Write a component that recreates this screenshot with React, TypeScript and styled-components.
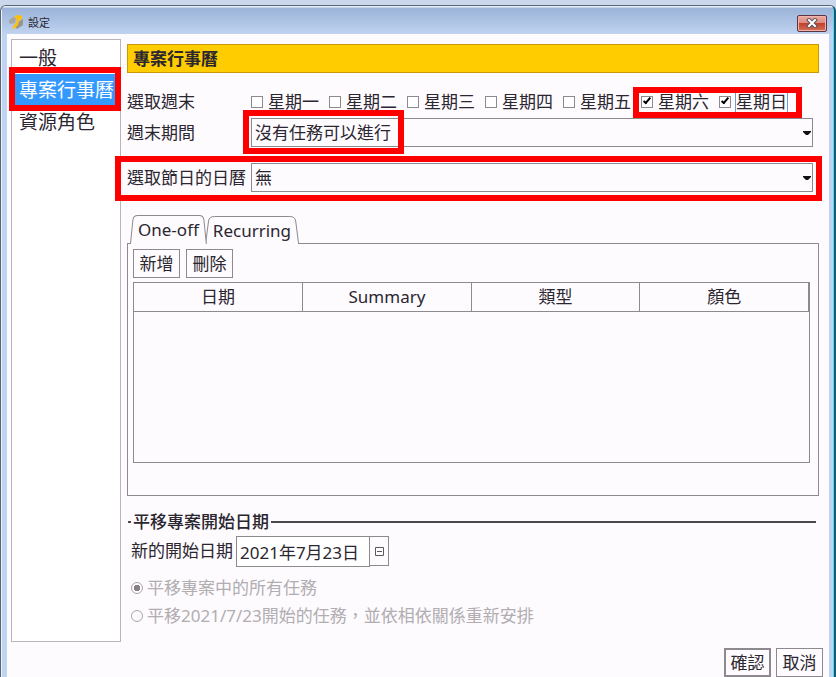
import React, { useState } from "react";
import styled, { createGlobalStyle, css } from "styled-components";

const GlobalStyle = createGlobalStyle`
  *, *::before, *::after { box-sizing: border-box; }
  body {
    margin: 0;
    background: #cbd8ec;
    color: #2b2630;
    font: 17px/24px "Noto Sans", "Noto Sans CJK TC", sans-serif;
  }
  button, input, select { font: inherit; color: inherit; }
`;

const line = "#8d898f";
const paper = "#fdfbfe";

const Desktop = styled.div`
  min-height: 100vh;
  padding-top: 5px;
  display: flex;
`;

const Window = styled.div`
  flex: 1;
  display: flex;
  flex-direction: column;
  padding: 0 5px 0 6px;
  background: #bfd3f3;
  border: 1px solid #5b6470;
  border-right: 2px solid #0f5f74;
  border-bottom: 0;
  border-radius: 6px 6px 0 0;
  box-shadow: inset 1px 1px 0 #eaf3fd, inset -1px 0 0 #5ed4f0;
  overflow: hidden;
`;

const TitleBar = styled.header`
  display: flex;
  align-items: center;
  gap: 4px;
  height: 28px;
  margin: 0 -4px 0 -5px;
  padding: 6px 6px 0 7px;
  background: linear-gradient(#e6effa 0 1px, #9bb4d8 2px, #bfd2f0);
  font-size: 11px;
  line-height: 16px;
`;

const TitleText = styled.h1`
  flex: 1;
  margin: 0;
  font: inherit;
`;

const CloseButton = styled.button`
  display: grid;
  place-items: center;
  width: 30px;
  height: 17px;
  padding: 0;
  border: 1px solid #5e3441;
  border-radius: 2px;
  background: linear-gradient(#eba89f, #dc8c82 45%, #c2412a 50%, #d4705a);
  box-shadow: inset 0 0 0 1px #efb5ac;
`;

const Client = styled.div`
  flex: 1;
  background: ${paper};
`;

const Columns = styled.div`
  display: grid;
  grid-template-columns: 110px minmax(0, 1fr);
  gap: 6px;
  padding: 5px 10px 0 4px;
`;

const Sidebar = styled.nav`
  padding-top: 2px;
  border: 1px solid #b9b5ba;
  background: #fff;
`;

const SideItem = styled.button<{ $active?: boolean }>`
  position: relative;
  display: block;
  width: 100%;
  height: 32px;
  padding: 0 0 0 7px;
  border: 0;
  background: ${(p) => (p.$active ? "#3399ff" : "transparent")};
  color: ${(p) => (p.$active ? "#fff" : "inherit")};
  font-size: 19px;
  line-height: 32px;
  text-align: left;
  white-space: nowrap;
`;

const mark = css`
  position: absolute;
  border: 6px solid #ff0000;
  pointer-events: none;
  z-index: 1;
`;

const ItemMark = styled.span`
  ${mark}
  inset: -7px -1px -5px -3px;
`;
const DaysMark = styled.span`
  ${mark}
  inset: 0 -5px -2px -8px;
`;
const ValueMark = styled.span`
  ${mark}
  inset: -8px auto -7px -8px;
  width: 161px;
`;
const RowMark = styled.span`
  ${mark}
  inset: -7px -9px -9px -12px;
`;

const Main = styled.main`
  padding: 5px 0 12px;
`;

const Banner = styled.h2`
  margin: 0;
  padding: 0 5px;
  border: 1px solid #c99a08;
  background: #ffcc00;
  font-size: 17px;
  line-height: 27px;
  font-weight: 700;
`;

const Row = styled.div<{ $top?: number }>`
  position: relative;
  display: grid;
  grid-template-columns: 124px minmax(0, 1fr);
  align-items: center;
  margin: ${(p) => p.$top ?? 0}px 6px 0 0;
  white-space: nowrap;
`;

const WeekendRow = styled(Row)`
  padding-bottom: 2px;
`;

const Days = styled.div`
  display: flex;
  height: 29px;
`;

const DayPair = styled.div`
  position: relative;
  display: flex;
`;

const Day = styled.label`
  display: flex;
  align-items: center;
  gap: 5px;
  width: 78px;
`;

const DayText = styled.span<{ $focus?: boolean }>`
  line-height: 20px;
  box-shadow: ${(p) => (p.$focus ? "-1px 0 0 #6f9ad6, 1px 0 0 #6f9ad6" : "none")};
`;

const Tick = styled.input`
  appearance: none;
  display: grid;
  place-items: center;
  width: 12px;
  height: 12px;
  margin: 0;
  border: 1px solid ${line};
  background: #fff;
  &:checked::before {
    content: "";
    width: 4px;
    height: 8px;
    margin-top: -3px;
    border: solid #000;
    border-width: 0 2px 2px 0;
    transform: rotate(40deg);
  }
`;

const SelectBox = styled.div`
  position: relative;
  display: grid;
`;

const Select = styled.select`
  appearance: none;
  height: 29px;
  padding: 0 20px 0 3px;
  border: 1px solid ${line};
  border-radius: 0;
  background: ${paper};
`;

const Caret = styled.svg`
  position: absolute;
  right: 2px;
  top: 13px;
  pointer-events: none;
`;

const TabList = styled.div`
  position: relative;
  display: flex;
  align-items: flex-end;
  margin: 23px 0 -1px 3px;
`;

const Tab = styled.button<{ $active: boolean }>`
  position: relative;
  z-index: ${(p) => (p.$active ? 1 : 0)};
  height: ${(p) => (p.$active ? 29 : 28)}px;
  padding: 0 8px;
  border: 0;
  background: none;
  line-height: 27px;
  & + & { margin-left: -2px; }
`;

const TabShape = styled.svg`
  position: absolute;
  inset: 0;
  width: 100%;
  height: 100%;
  z-index: -1;
`;

const Panel = styled.section`
  padding: 5px 8px 32px 5px;
  border: 1px solid ${line};
`;

const Buttons = styled.div<{ $end?: boolean }>`
  display: flex;
  gap: ${(p) => (p.$end ? 5 : 6)}px;
  justify-content: ${(p) => (p.$end ? "flex-end" : "flex-start")};
  padding: ${(p) => (p.$end ? "6px 6px 0" : "0")};
`;

const Button = styled.button<{ $primary?: boolean }>`
  width: 47px;
  height: 29px;
  padding: 0;
  border: ${(p) => (p.$primary ? 2 : 1)}px solid ${line};
  background: ${paper};
  line-height: 24px;
  white-space: nowrap;
`;

const TableBox = styled.div`
  min-height: 181px;
  margin-top: 4px;
  border: 1px solid ${line};
`;

const Table = styled.table`
  width: 100%;
  table-layout: fixed;
  border-collapse: collapse;
`;

const HeadCell = styled.th`
  height: 28px;
  padding: 0;
  border-bottom: 1px solid ${line};
  border-right: 1px solid ${line};
  font-weight: 400;
`;

const Group = styled.fieldset`
  min-width: 0;
  margin: 14px 0 0;
  padding: 0 0 0 4px;
  border: 0;
`;

const GroupTitle = styled.legend`
  display: flex;
  align-items: center;
  gap: 2px;
  width: 100%;
  margin-left: -3px;
  padding: 0;
  font-weight: 500;
  &::before, &::after {
    content: "";
    width: 3px;
    border-top: 2px solid #4b484d;
  }
  &::after { flex: 1; }
`;

const DateRow = styled.div`
  display: flex;
  align-items: flex-start;
  margin: 2px 0 7px;
`;

const DateLabel = styled.label`
  width: 105px;
  line-height: 30px;
  white-space: nowrap;
`;

const DateInput = styled.input`
  width: 134px;
  height: 31px;
  padding: 0 3px;
  border: 1px solid ${line};
  background: #fff;
`;

const DateButton = styled.button`
  display: grid;
  place-items: center;
  width: 19px;
  height: 30px;
  padding: 0;
  border: 1px solid ${line};
  border-left: 0;
  background: ${paper};
`;

const Option = styled.label`
  display: flex;
  align-items: center;
  gap: 4px;
  height: 28px;
  color: #b1adb1;
`;

const Radio = styled.input`
  appearance: none;
  width: 12px;
  height: 12px;
  margin: 0;
  border: 1px solid #a9a5a9;
  border-radius: 50%;
  &:checked { background: radial-gradient(circle, #858185 0 3px, transparent 3px); }
`;

function DropDown({ id, value, marked }: { id: string; value: string; marked?: boolean }) {
  return (
    <SelectBox>
      <Select id={id} defaultValue={value}>
        <option>{value}</option>
      </Select>
      <Caret width="8" height="4" viewBox="0 0 8 4" aria-hidden="true">
        <path d="M0 0H8V1L5 4H3L0 1Z" fill="#111" />
      </Caret>
      {marked && <ValueMark />}
    </SelectBox>
  );
}

function DayBox({ name, checked, focus }: { name: string; checked?: boolean; focus?: boolean }) {
  return (
    <Day>
      <Tick type="checkbox" defaultChecked={checked} />
      <DayText $focus={focus}>{name}</DayText>
    </Day>
  );
}

function TabButton({ name, active, onPick }: { name: string; active: boolean; onPick: () => void }) {
  return (
    <Tab type="button" role="tab" aria-selected={active} $active={active} onClick={onPick}>
      <TabShape viewBox="0 0 80 28" preserveAspectRatio="none" aria-hidden="true">
        <path
          d="M0.5 28L3 5Q3.5 0.5 8 0.5H72Q76.5 0.5 77 5L79.5 28"
          fill={paper}
          stroke={line}
          vectorEffect="non-scaling-stroke"
        />
      </TabShape>
      {name}
    </Tab>
  );
}

export default function App() {
  const [tab, setTab] = useState("One-off");
  return (
    <>
      <GlobalStyle />
      <Desktop>
        <Window>
          <TitleBar>
            <svg width="15" height="16" viewBox="0 0 15 16" aria-hidden="true">
              <path d="M0 5L4 2L7 3L6 8L2 9L0 8Z" fill="#aaa59e" />
              <path d="M9 7L14 4V10L8 14L6 12Z" fill="#99958f" />
              <path d="M5 2L8 0L13 1V4L10 6L9 10L4 15L4 11L7 8L8 4Z" fill="#fdc00c" />
            </svg>
            <TitleText>設定</TitleText>
            <CloseButton type="button" aria-label="關閉">
              <svg width="12" height="10" viewBox="0 0 12 10" aria-hidden="true">
                <path d="M3 2L9 8M9 2L3 8" stroke="#59525e" strokeWidth="4" strokeLinecap="square" />
                <path d="M3 2L9 8M9 2L3 8" stroke="#fff" strokeWidth="2" strokeLinecap="square" />
              </svg>
            </CloseButton>
          </TitleBar>
          <Client>
            <Columns>
              <Sidebar>
                <SideItem type="button">一般</SideItem>
                <SideItem type="button" $active>
                  專案行事曆
                  <ItemMark />
                </SideItem>
                <SideItem type="button">資源角色</SideItem>
              </Sidebar>
              <Main>
                <Banner>專案行事曆</Banner>
                <WeekendRow $top={14} role="group" aria-labelledby="weekend">
                  <span id="weekend">選取週末</span>
                  <Days>
                    {["一", "二", "三", "四", "五"].map((d) => (
                      <DayBox key={d} name={"星期" + d} />
                    ))}
                    <DayPair>
                      <DayBox name="星期六" checked />
                      <DayBox name="星期日" checked focus />
                      <DaysMark />
                    </DayPair>
                  </Days>
                </WeekendRow>
                <Row>
                  <label htmlFor="duration">週末期間</label>
                  <DropDown id="duration" value="沒有任務可以進行" marked />
                </Row>
                <Row $top={16}>
                  <label htmlFor="holiday">選取節日的日曆</label>
                  <DropDown id="holiday" value="無" />
                  <RowMark />
                </Row>
                <TabList role="tablist">
                  {["One-off", "Recurring"].map((t) => (
                    <TabButton key={t} name={t} active={t === tab} onPick={() => setTab(t)} />
                  ))}
                </TabList>
                <Panel>
                  <Buttons>
                    <Button type="button">新增</Button>
                    <Button type="button">刪除</Button>
                  </Buttons>
                  <TableBox>
                    <Table>
                      <thead>
                        <tr>
                          {["日期", "Summary", "類型", "顏色"].map((h) => (
                            <HeadCell key={h} scope="col">{h}</HeadCell>
                          ))}
                        </tr>
                      </thead>
                    </Table>
                  </TableBox>
                </Panel>
                <Group>
                  <GroupTitle>平移專案開始日期</GroupTitle>
                  <DateRow>
                    <DateLabel htmlFor="start">新的開始日期</DateLabel>
                    <DateInput id="start" defaultValue="2021年7月23日" />
                    <DateButton type="button" aria-label="選擇日期">
                      <svg width="9" height="9" viewBox="0 0 9 9" fill="none" stroke="#5c585e" aria-hidden="true">
                        <path d="M0.5 0.5H8.5V8.5H0.5ZM2 4.5H7" />
                      </svg>
                    </DateButton>
                  </DateRow>
                  <Option>
                    <Radio type="radio" name="shift" defaultChecked disabled />
                    平移專案中的所有任務
                  </Option>
                  <Option>
                    <Radio type="radio" name="shift" disabled />
                    平移2021/7/23開始的任務，並依相依關係重新安排
                  </Option>
                </Group>
              </Main>
            </Columns>
            <Buttons $end>
              <Button type="button" $primary>確認</Button>
              <Button type="button">取消</Button>
            </Buttons>
          </Client>
        </Window>
      </Desktop>
    </>
  );
}
